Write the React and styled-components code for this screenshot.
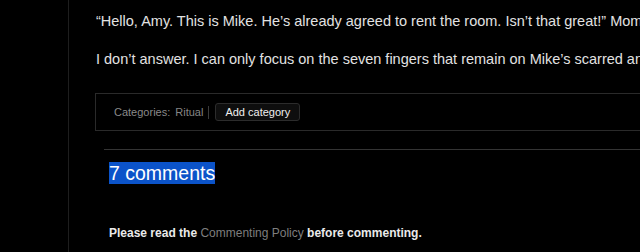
import React from 'react'
import styled, { createGlobalStyle } from 'styled-components'

const GlobalStyle = createGlobalStyle`
    html, body {
        margin: 0;
        padding: 0;
        background: #000;
        overflow: hidden;
    }
    body {
        font-family: "Liberation Sans", Arial, sans-serif;
    }
`

const Page = styled.div`
    display: flex;
    width: 1100px;
    height: 252px;
    background: #000;
`

const Gutter = styled.div`
    width: 68px;
    flex-shrink: 0;
`

const Main = styled.div`
    flex: 1;
    border-left: 1px solid #1e1e1e;
    padding: 10px 0 0 27px;
`

const Para = styled.p`
    margin: 0 0 16px;
    font-size: 14.5px;
    line-height: 22px;
    color: #e2e2e2;
`

const MetaBox = styled.div`
    display: flex;
    align-items: center;
    margin: 23px 0 0 -1px;
    padding: 9px 18px;
    border: 1px solid #2a2a2a;
    font-size: 11px;
    color: #8a8a8a;
`

const Label = styled.span`
    margin-right: 5px;
`

const CatLink = styled.a`
    color: #858585;
    text-decoration: none;
`

const Divider = styled.span`
    width: 1px;
    height: 13px;
    background: #3a3a3a;
    margin: 0 6px 0 5px;
`

const AddButton = styled.button`
    height: 18px;
    padding: 0 9px;
    background: #0e0e0e;
    border: 1px solid #2c2c2c;
    border-radius: 3px;
    color: #f0f0f0;
    font-family: "Liberation Sans", Arial, sans-serif;
    font-size: 11px;
    line-height: 16px;
    cursor: pointer;
`

const Comments = styled.section`
    margin: 18px 0 0 8px;
    border-top: 1px solid #343434;
    padding: 12px 0 0 5px;
`

const Heading = styled.h2`
    margin: 0;
    font-size: 19.5px;
    font-weight: normal;
    line-height: 22px;
    color: #fff;
`

const Selected = styled.span`
    background: #0b53c9;
`

const Notice = styled.p`
    margin: 42px 0 0;
    font-size: 12px;
    font-weight: bold;
    color: #eaeaea;
`

const PolicyLink = styled.a`
    color: #7e7e7e;
    font-weight: normal;
    text-decoration: none;
`

const App = () => {
    return (
        <Page>
            <GlobalStyle />
            <Gutter />
            <Main>
                <Para>
                    “Hello, Amy. This is Mike. He’s already agreed to rent the room. Isn’t that great!” Mom chirps.
                </Para>
                <Para>
                    I don’t answer. I can only focus on the seven fingers that remain on Mike’s scarred and calloused hands.
                </Para>
                <MetaBox>
                    <Label>Categories:</Label>
                    <CatLink href="#">Ritual</CatLink>
                    <Divider />
                    <AddButton>Add category</AddButton>
                </MetaBox>
                <Comments>
                    <Heading><Selected>7 comments</Selected></Heading>
                    <Notice>
                        Please read the <PolicyLink href="#">Commenting Policy</PolicyLink> before commenting.
                    </Notice>
                </Comments>
            </Main>
        </Page>
    )
}

export default App
